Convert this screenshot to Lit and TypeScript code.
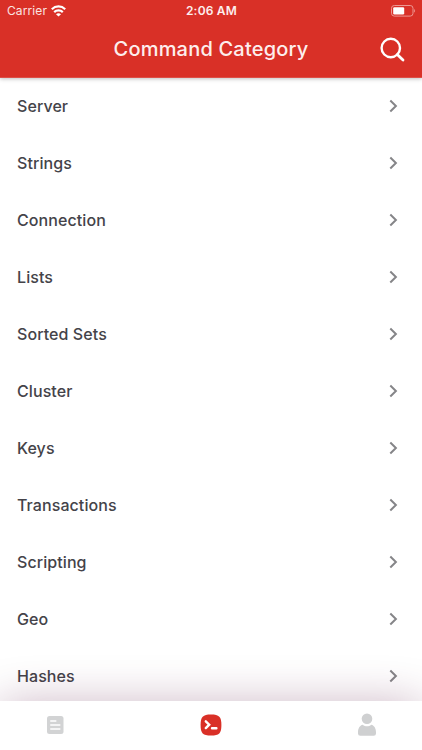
import { LitElement, html, css } from "lit";
import { customElement, property } from "lit/decorators.js";

@customElement("status-bar")
class StatusBar extends LitElement {
  static styles = css`
    :host { display: grid; grid-template-columns: 1fr auto 1fr; align-items: center; height: 21px; padding: 0 6px 0 7px; box-sizing: border-box; }
    .carrier { display: flex; align-items: center; gap: 4px; font-size: 12px; letter-spacing: 0.1px; color: #fbe3e1; }
    .time { font-size: 12px; font-weight: 600; letter-spacing: 0.2px; color: #fdeeed; }
    .battery { justify-self: end; }
    svg { display: block; }
  `;
  render() {
    return html`
      <div class="carrier">
        <span>Carrier</span>
        <svg width="15" height="12" viewBox="0 0 15 12" fill="none" stroke="#fff" stroke-width="2.2">
          <path d="M.8 4.2C4.6.5 10.4.5 14.2 4.2" />
          <path d="M3.2 7.1C5.6 4.8 9.4 4.8 11.8 7.1" />
          <path d="M7.5 11.6 5 9.2C6.5 7.9 8.5 7.9 10 9.2Z" fill="#fff" stroke="none" />
        </svg>
      </div>
      <div class="time">2:06 AM</div>
      <svg class="battery" width="25" height="12" viewBox="0 0 25 12">
        <rect x=".5" y=".5" width="21.5" height="10.6" rx="2.8" fill="none" stroke="#ed9893" />
        <rect x="2.2" y="2.2" width="11" height="7.3" rx="1.2" fill="#fff" />
        <path d="M23.2 4v3.6c1.2-.5 1.2-3.1 0-3.6z" fill="#ed9893" />
      </svg>
    `;
  }
}

@customElement("category-row")
class CategoryRow extends LitElement {
  @property() label = "";
  static styles = css`
    :host { display: flex; align-items: center; justify-content: space-between; height: 57px; padding: 0 24px 0 17px; box-sizing: border-box; flex: none; }
    .label { font-size: 16px; font-weight: 500; letter-spacing: 0.08px; line-height: 20px; color: #444349; }
    svg { display: block; }
  `;
  render() {
    return html`
      <span class="label">${this.label}</span>
      <svg width="9" height="14" viewBox="0 0 9 14" fill="none" stroke="#858588" stroke-width="2">
        <path d="M1.3 1.5 6.9 7 1.3 12.5" />
      </svg>
    `;
  }
}

@customElement("app-root")
class AppRoot extends LitElement {
  private categories = ["Server", "Strings", "Connection", "Lists", "Sorted Sets", "Cluster", "Keys", "Transactions", "Scripting", "Geo", "Hashes"];
  static styles = css`
    :host { display: flex; flex-direction: column; height: 750px; overflow: hidden; background: #fff; font-family: Inter, "Liberation Sans", sans-serif; }
    .header { flex: none; height: 77px; border-bottom: 1px solid #dd4f47; margin-bottom: -1px; background: #d93027; box-shadow: 0 1px 4px rgba(0, 0, 0, 0.25); z-index: 1; }
    .title-bar { display: grid; grid-template-columns: 1fr auto 1fr; align-items: center; height: 56px; padding: 0 17px; }
    .title { grid-column: 2; font-size: 20px; font-weight: 500; line-height: 24px; letter-spacing: 0.2px; color: #fdeeed; }
    .search { justify-self: end; }
    .list { flex: 1; min-height: 0; overflow: hidden; display: flex; flex-direction: column; }
    .tabs { flex: none; height: 49px; padding-bottom: 1px; box-sizing: border-box; background: #fff; box-shadow: 0 4px 48px rgba(85, 15, 60, 0.33); z-index: 1; display: grid; grid-template-columns: 110px 1fr 110px; align-items: center; justify-items: center; }
    svg { display: block; }
  `;
  render() {
    return html`
      <header class="header">
        <status-bar></status-bar>
        <div class="title-bar">
          <div class="title">Command Category</div>
          <svg class="search" width="25" height="25" viewBox="0 0 25 25" fill="none" stroke="#fff" stroke-width="2.4">
            <circle cx="10.8" cy="11" r="9.2" />
            <path d="M17.3 17.5 23 23" stroke-width="2.8" stroke-linecap="round" />
          </svg>
        </div>
      </header>
      <main class="list">${this.categories.map((c) => html`<category-row .label=${c}></category-row>`)}</main>
      <nav class="tabs">
        <svg width="17" height="18" viewBox="0 0 17 18">
          <rect width="16.5" height="18" rx="2.5" fill="#d2d3d4" />
          <path d="M3.7 5h5.2M3.7 9h9.2M3.7 13h9.2" stroke="#fff" stroke-width="1.3" stroke-linecap="round" />
        </svg>
        <svg width="22" height="22" viewBox="0 0 22 22">
          <path d="M11 .4C19.2.4 21.4 2.6 21.4 11S19.2 21.5 11 21.5.6 19.4.6 11 2.8.4 11 .4Z" fill="#d93027" />
          <path d="M5.8 7.3 9.2 10.7 5.8 14.1M12 14.2h4.4" fill="none" stroke="#fff" stroke-width="2.4" stroke-linecap="round" />
        </svg>
        <svg width="18" height="24" viewBox="0 0 18 24">
          <circle cx="9" cy="5.8" r="5.3" fill="#cfd0d1" />
          <path d="M4.7 11.8C7.2 13.8 10.8 13.8 13.3 11.8 16.3 12.5 18 15.5 18 19.3V20.5Q18 22.7 15.7 22.7H2.3Q0 22.7 0 20.5V19.3C0 15.5 1.7 12.5 4.7 11.8Z" fill="#cfd0d1" />
        </svg>
      </nav>
    `;
  }
}
